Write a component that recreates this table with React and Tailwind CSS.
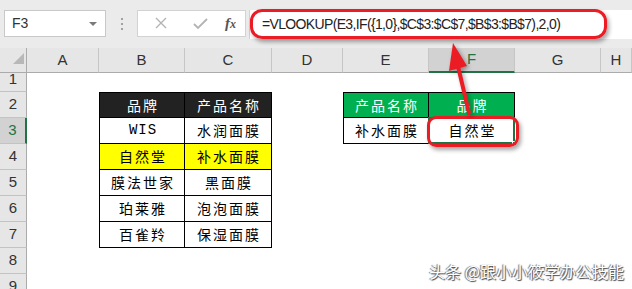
import React from "react";

const SANS = "font-['Liberation_Sans','Noto_Sans_CJK_SC',sans-serif]";
const CJK = "font-['Noto_Sans_CJK_SC','Liberation_Sans',sans-serif]";
const GRID = "grid grid-cols-[27px_72px_86px_87px_71px_86px_86px_86px_1fr]";

function Cell({ className = "", children }) {
  return (
    <div className={`relative flex items-center justify-center text-[14px] text-black tracking-[2px] pl-[2px] ${CJK} ${className}`}>
      {children}
    </div>
  );
}

function RowHead({ n, selected, h = "h-[26px]" }) {
  return (
    <div
      className={`${h} flex items-center justify-center border-b border-[#c3c3c3] text-[15px] ${SANS} ${
        selected
          ? "bg-[#d2d2d2] text-[#217346] border-r-2 border-r-[#217346]"
          : "bg-[#e6e6e6] text-[#333] border-r border-r-[#ababab]"
      }`}
    >
      {n}
    </div>
  );
}

const data = [
  ["WIS", "水润面膜"],
  ["自然堂", "补水面膜"],
  ["膜法世家", "黑面膜"],
  ["珀莱雅", "泡泡面膜"],
  ["百雀羚", "保湿面膜"],
];

export default function App() {
  const colLetters = ["A", "B", "C", "D", "E", "F", "G", "H"];
  return (
    <div className="relative w-[632px] h-[289px] overflow-hidden bg-white">
      {/* Formula bar */}
      <div className="h-[48px] bg-[#ebebeb] flex items-start pt-[10px] pl-[4px]">
        <div className={`w-[102px] h-[27px] bg-white border border-[#c8c8c8] flex items-center justify-between pl-[7px] pr-[8px] ${SANS}`}>
          <span className="text-[14px] text-[#333]">F3</span>
          <span className="w-0 h-0 border-l-[4px] border-r-[4px] border-t-[4px] border-l-transparent border-r-transparent border-t-[#7a7a7a]" />
        </div>
        <div className="w-[31px] h-[27px] flex flex-col items-center justify-center gap-[3px]">
          <span className="w-[2px] h-[2px] bg-[#a0a0a0]" />
          <span className="w-[2px] h-[2px] bg-[#a0a0a0]" />
          <span className="w-[2px] h-[2px] bg-[#a0a0a0]" />
        </div>
        <div className="w-[109px] h-[27px] bg-white border border-[#d2d2d2] flex items-center">
          <svg width="38" height="25" viewBox="0 0 38 25" className="ml-[6px]">
            <path d="M12 7 L22 17 M22 7 L12 17" stroke="#b4b4b4" strokeWidth="1.4" fill="none" />
          </svg>
          <svg width="38" height="25" viewBox="0 0 38 25">
            <path d="M12 13 L16 17 L25 8" stroke="#b4b4b4" strokeWidth="1.8" fill="none" />
          </svg>
          <span className="ml-[5px] text-[15px] italic text-[#555] font-['Liberation_Serif',serif] font-bold">
            f<span className="text-[12px]">x</span>
          </span>
        </div>
        <div className="flex-1 ml-[3px] h-[29px] bg-white border-l border-[#d2d2d2] flex items-center pl-[12px]">
          <span className={`text-[14px] text-[#222] tracking-[-0.65px] ${SANS}`}>
            =VLOOKUP(E3,IF({"{"}1,0{"}"},$C$3:$C$7,$B$3:$B$7),2,0)
          </span>
        </div>
      </div>

      {/* Column headers */}
      <div className={`${GRID} h-[19px]`}>
        <div className="relative bg-[#e6e6e6] border-b border-r border-[#ababab]">
          <svg width="27" height="19" className="absolute left-0 top-0">
            <polygon points="24,5 24,16 13,16" fill="#b8b8b8" />
          </svg>
        </div>
        {colLetters.map((c) => (
          <div
            key={c}
            className={`flex items-center justify-center border-r border-[#c6c6c6] text-[15px] ${SANS} ${
              c === "F"
                ? "bg-[#d2d2d2] text-[#217346] border-b-2 border-b-[#217346]"
                : "bg-[#e6e6e6] text-[#333] border-b border-b-[#ababab]"
            }`}
          >
            {c}
          </div>
        ))}
      </div>

      {/* Row 1 */}
      <div className={`${GRID}`}>
        <RowHead n="1" h="h-[25px]" />
        <div className="col-span-8" />
      </div>

      {/* Row 2 */}
      <div className={`${GRID}`}>
        <RowHead n="2" />
        <div />
        <Cell className="bg-[#222222] text-white border border-black">品牌</Cell>
        <Cell className="bg-[#222222] text-white border-t border-r border-b border-black">产品名称</Cell>
        <div />
        <Cell className="bg-[#00b050] text-white border border-black">产品名称</Cell>
        <Cell className="bg-[#00b050] text-white border-t border-r border-b border-black">品牌</Cell>
        <div />
        <div />
      </div>

      {/* Rows 3-7 */}
      {data.map(([brand, product], i) => {
        const r = i + 3;
        const yellow = r === 4 ? "bg-[#ffff00]" : "";
        return (
          <div key={r} className={`${GRID}`}>
            <RowHead n={String(r)} selected={r === 3} />
            <div />
            <Cell className={`border-l border-r border-b border-black ${yellow}`}>
              {brand === "WIS" ? (
                <span className="font-['Liberation_Mono',monospace] text-[14px] tracking-[1px]">WIS</span>
              ) : (
                brand
              )}
            </Cell>
            <Cell className={`border-r border-b border-black ${yellow}`}>{product}</Cell>
            <div />
            {r === 3 ? (
              <>
                <Cell className="border-l border-r border-b border-black">补水面膜</Cell>
                <Cell className="border-r border-b border-black">
                  <div className="absolute -left-[1px] -top-[1px] -right-[1px] -bottom-[1px] border-2 border-[#217346]" />
                  <div className="absolute -right-[3px] -bottom-[3px] w-[5px] h-[5px] bg-[#217346] border border-white" />
                  <span className="relative">自然堂</span>
                </Cell>
              </>
            ) : (
              <>
                <div />
                <div />
              </>
            )}
            <div />
            <div />
          </div>
        );
      })}

      {/* Rows 8-9 */}
      {["8", "9"].map((n) => (
        <div key={n} className={`${GRID}`}>
          <RowHead n={n} />
          <div className="col-span-8" />
        </div>
      ))}

      {/* Annotations */}
      <div className="absolute left-[250px] top-[9px] w-[357px] h-[30px] border-[3px] border-[#ec1c24] rounded-[12px] shadow-[2px_3px_4px_rgba(0,0,0,0.35)]" />
      <div className="absolute left-[427px] top-[116px] w-[92px] h-[31px] border-[3px] border-[#ec1c24] rounded-[9px] shadow-[2px_3px_4px_rgba(0,0,0,0.35)]" />
      <svg
        className="absolute left-0 top-0 drop-shadow-[2px_2px_2px_rgba(0,0,0,0.35)]"
        width="632"
        height="289"
        viewBox="0 0 632 289"
      >
        <line x1="469" y1="113" x2="457" y2="62" stroke="#ec1c24" strokeWidth="4" strokeLinecap="round" />
        <polygon points="453,43 449,71 467,66" fill="#ec1c24" />
      </svg>

      {/* Watermark */}
      <div className={`absolute right-[8px] bottom-[6px] text-[16px] text-white ${CJK} [text-shadow:1px_1px_1px_#444,-1px_0_1px_#666]`}>
        头条 @跟小小筱学办公技能
      </div>
    </div>
  );
}
